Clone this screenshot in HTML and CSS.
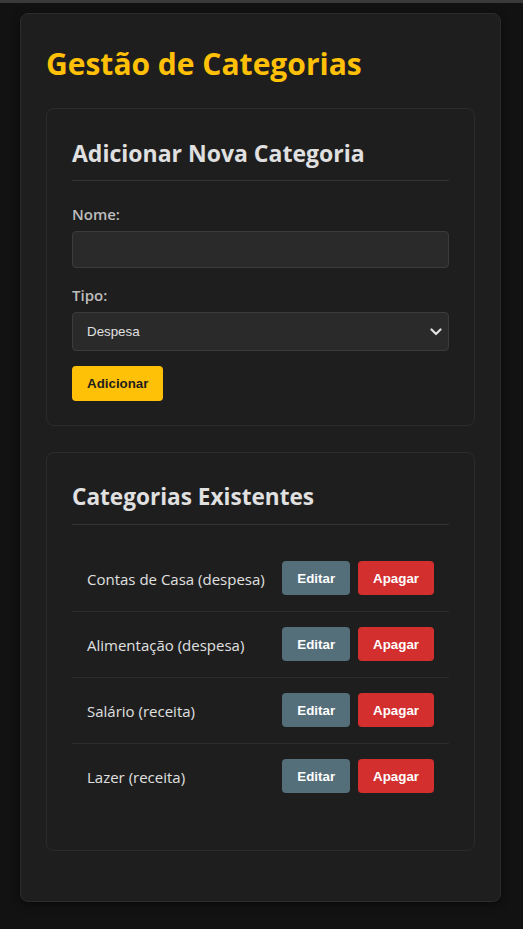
FILE: index.html
```html
<!DOCTYPE html>
<html lang="pt">
<head>
<meta charset="utf-8">
<title>Gestão de Categorias</title>
<link rel="stylesheet" href="styles.css">
</head>
<body>
<div class="topbar"></div>
<main class="container">
  <h1 class="title">Gestão de Categorias</h1>

  <section class="card card-form">
    <h2 class="card-title">Adicionar Nova Categoria</h2>
    <form class="form">
      <div class="field">
        <label class="label" for="nome">Nome:</label>
        <input class="input" id="nome" type="text">
      </div>
      <div class="field">
        <label class="label" for="tipo">Tipo:</label>
        <div class="select-wrap">
          <select class="select" id="tipo">
            <option>Despesa</option>
            <option>Receita</option>
          </select>
          <svg class="chevron" width="12" height="8" viewBox="0 0 12 8"><path d="M1.5 1.5 L6 6 L10.5 1.5" fill="none" stroke="#e0e0e0" stroke-width="2.2" stroke-linecap="round" stroke-linejoin="round"/></svg>
        </div>
      </div>
      <button class="btn btn-primary" type="button">Adicionar</button>
    </form>
  </section>

  <section class="card">
    <h2 class="card-title card-title-sm">Categorias Existentes</h2>
    <ul class="list">
      <li class="item"><span class="item-name">Contas de Casa (despesa)</span><span class="actions"><button class="btn btn-edit">Editar</button><button class="btn btn-delete">Apagar</button></span></li>
      <li class="item"><span class="item-name">Alimentação (despesa)</span><span class="actions"><button class="btn btn-edit">Editar</button><button class="btn btn-delete">Apagar</button></span></li>
      <li class="item"><span class="item-name">Salário (receita)</span><span class="actions"><button class="btn btn-edit">Editar</button><button class="btn btn-delete">Apagar</button></span></li>
      <li class="item"><span class="item-name">Lazer (receita)</span><span class="actions"><button class="btn btn-edit">Editar</button><button class="btn btn-delete">Apagar</button></span></li>
    </ul>
  </section>
</main>
</body>
</html>
```
FILE: styles.css
```css
* { box-sizing: border-box; }

html, body {
  margin: 0;
  padding: 0;
  background: #121212;
}

body {
  font-family: "Open Sans", "Noto Sans", sans-serif;
  color: #e0e0e0;
  min-height: 929px;
}

.topbar {
  height: 3px;
  background: #3a3a3a;
}

.container {
  margin: 10px 22px 0 20px;
  width: 481px;
  background: #1e1e1e;
  border: 1px solid #2c2c2c;
  border-radius: 8px;
  padding: 25px;
  box-shadow: 0 2px 8px rgba(0, 0, 0, 0.5);
}

.title {
  margin: 0 0 23px;
  padding-top: 4px;
  font-size: 30px;
  line-height: 42px;
  font-weight: 700;
  color: #ffc107;
}

.card {
  border: 1px solid #2c2c2c;
  border-radius: 8px;
  padding: 25px;
  margin-bottom: 25px;
  background: #1e1e1e;
}

.card-form {
  padding-bottom: 24px;
}

.card + .card { margin-top: 26px; }
.card:first-of-type { margin-bottom: 0; }

.card-title {
  margin: 0 0 20px;
  font-size: 23px;
  line-height: 32px;
  font-weight: 700;
  color: #e0e0e0;
  padding-top: 3px;
  padding-bottom: 11px;
  border-bottom: 1px solid #333333;
}

.card-title-sm {
  font-size: 22.6px;
}

.form {
  padding-top: 1px;
}

.field {
  margin-bottom: 15px;
}

.label {
  display: block;
  font-size: 15px;
  line-height: 24px;
  font-weight: 600;
  color: #bdbdbd;
  margin-bottom: 5px;
}

.input {
  display: block;
  width: 100%;
  height: 37px;
  background: #2a2a2a;
  border: 1px solid #3b3b3b;
  border-radius: 4px;
  color: #e0e0e0;
  padding: 0 10px;
  font-size: 14px;
}

.select-wrap {
  position: relative;
}

.select {
  display: block;
  width: 100%;
  height: 39px;
  background: #2a2a2a;
  border: 1px solid #3b3b3b;
  border-radius: 4px;
  color: #e0e0e0;
  padding: 0 14px;
  font-family: "Liberation Sans", Arial, sans-serif;
  font-size: 13.33px;
  appearance: none;
  -webkit-appearance: none;
}

.chevron {
  position: absolute;
  right: 7px;
  top: 16px;
  pointer-events: none;
}

.btn {
  height: 34px;
  padding: 0 15px;
  border: none;
  border-radius: 4px;
  font-family: "Liberation Sans", Arial, sans-serif;
  font-size: 13.33px;
  font-weight: 700;
  cursor: pointer;
}

.btn-primary {
  background: #ffc107;
  color: #1e1e1e;
  height: 35px;
}

.btn-edit {
  background: #546e7a;
  color: #ffffff;
}

.btn-delete {
  background: #d32f2f;
  color: #ffffff;
}

.list {
  list-style: none;
  margin: 0 0 16px;
  padding: 1px 0 0;
}

.item {
  display: flex;
  align-items: center;
  justify-content: space-between;
  padding: 15px 15px 16px;
  border-bottom: 1px solid #2c2c2c;
}

.item:last-child { border-bottom: none; }

.item-name {
  font-size: 15px;
  line-height: 24px;
  padding-top: 2px;
}

.actions {
  display: flex;
  gap: 8px;
}
```
